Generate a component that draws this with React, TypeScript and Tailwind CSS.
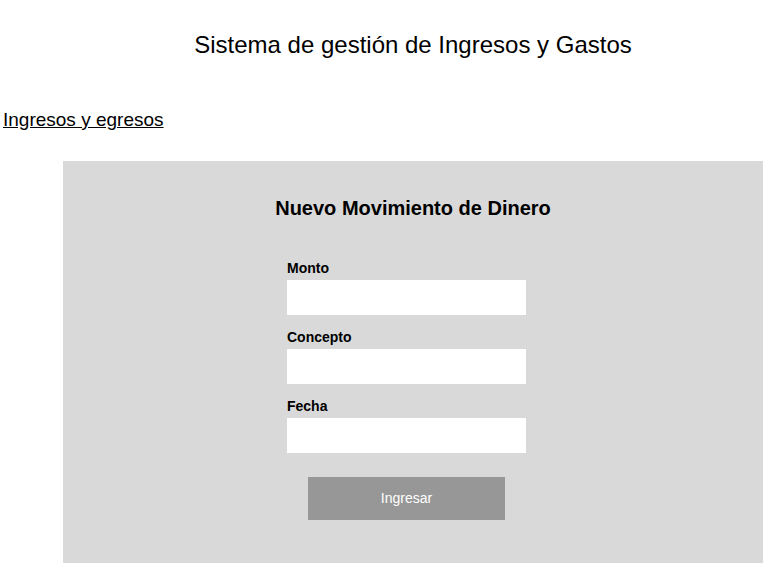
import { useState } from 'react';

export default function App() {
  const [form, setForm] = useState({ monto: '', concepto: '', fecha: '' });

  const fields: { key: 'monto' | 'concepto' | 'fecha'; label: string }[] = [
    { key: 'monto', label: 'Monto' },
    { key: 'concepto', label: 'Concepto' },
    { key: 'fecha', label: 'Fecha' },
  ];

  return (
    <div className="min-h-screen bg-white text-black font-['Liberation_Sans',Arial,sans-serif]">
      <div className="ml-[63px] w-[700px] h-[90px] flex items-center justify-center">
        <h1 className="text-[24px] leading-[28px] font-normal">Sistema de gestión de Ingresos y Gastos</h1>
      </div>
      <div className="mt-[18px] pl-[3px] h-6">
        <a href="#" className="text-[19px] leading-6 underline text-black">Ingresos y egresos</a>
      </div>
      <div className="mt-[29px] ml-[63px] w-[700px] bg-[#d9d9d9] pt-[35px] pb-[60px]">
        <h2 className="text-center text-[20px] leading-6 font-bold">Nuevo Movimiento de Dinero</h2>
        <form className="mt-10 ml-[224px] w-[239px]" onSubmit={e => e.preventDefault()}>
          {fields.map((f, i) => (
            <div key={f.key} className={i > 0 ? 'mt-[14px]' : ''}>
              <label className="block text-[14px] leading-4 font-bold">{f.label}</label>
              <input
                className="mt-1 block w-[239px] h-[35px] bg-white border-0 outline-none px-2 text-sm"
                value={form[f.key]}
                onChange={e => setForm({ ...form, [f.key]: e.target.value })}
              />
            </div>
          ))}
          <button type="submit" className="mt-6 ml-[21px] w-[197px] h-[43px] bg-[#979797] text-white text-[14px] flex items-center justify-center">
            Ingresar
          </button>
        </form>
      </div>
    </div>
  );
}
